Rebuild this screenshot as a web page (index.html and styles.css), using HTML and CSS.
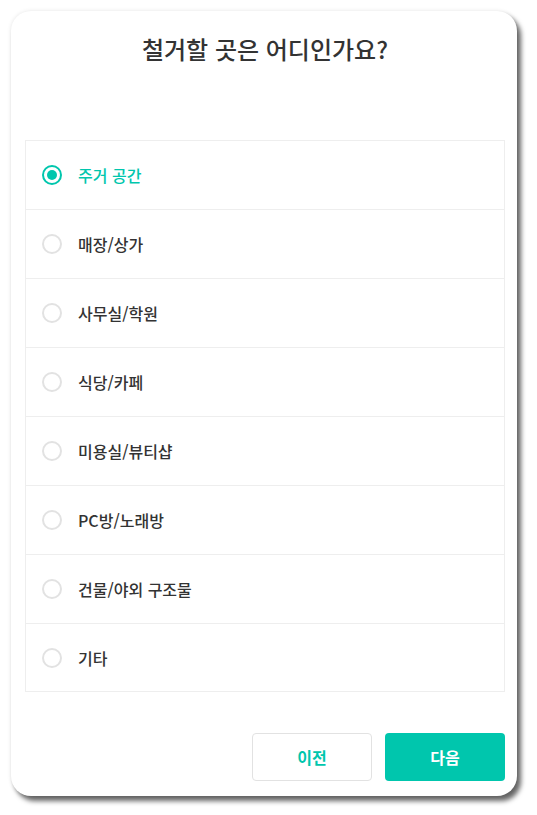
FILE: index.html
```html
<!DOCTYPE html>
<html lang="ko">
<head>
  <meta charset="UTF-8" />
  <meta name="viewport" content="width=device-width, initial-scale=1.0">
  <title>철거 장소 선택</title>
  <link rel="stylesheet" href="styles.css">
</head>
<body>
  <div class="modal">
    <h1 class="modal-title">철거할 곳은 어디인가요?</h1>

    <!-- Place options -->
    <div class="option-list">
      <label class="option-item checked">
        <span class="radio"></span>
        <span class="option-label">주거 공간</span>
      </label>
      <label class="option-item">
        <span class="radio"></span>
        <span class="option-label">매장/상가</span>
      </label>
      <label class="option-item">
        <span class="radio"></span>
        <span class="option-label">사무실/학원</span>
      </label>
      <label class="option-item">
        <span class="radio"></span>
        <span class="option-label">식당/카페</span>
      </label>
      <label class="option-item">
        <span class="radio"></span>
        <span class="option-label">미용실/뷰티샵</span>
      </label>
      <label class="option-item">
        <span class="radio"></span>
        <span class="option-label">PC방/노래방</span>
      </label>
      <label class="option-item">
        <span class="radio"></span>
        <span class="option-label">건물/야외 구조물</span>
      </label>
      <label class="option-item">
        <span class="radio"></span>
        <span class="option-label">기타</span>
      </label>
    </div>

    <div class="modal-footer">
      <button class="btn btn-prev">이전</button>
      <button class="btn btn-next">다음</button>
    </div>
  </div>
</body>
</html>
```

FILE: styles.css
```css
* {
  margin: 0;
  padding: 0;
  box-sizing: border-box;
  font-family: 'Noto Sans CJK KR', 'Noto Sans', sans-serif;
}
body {
  background-color: #fff;
  padding: 11px;
}
.modal {
  width: 506px;
  height: 785px;
  background-color: #fff;
  border-radius: 20px;
  padding: 0 12px 0 14px;
  box-shadow: 4px 5px 5px rgba(0, 0, 0, 0.6), 0 0 4px rgba(0, 0, 0, 0.1);
  display: flex;
  flex-direction: column;
}
.modal-title {
  font-size: 24px;
  font-weight: 500;
  color: #333;
  text-align: center;
  line-height: 30px;
  padding-top: 23px;
  height: 129px;
}
/* Option list */
.option-list {
  border: 1px solid #eee;
}
.option-item {
  display: flex;
  align-items: center;
  height: 69px;
  padding-left: 16px;
  border-bottom: 1px solid #eee;
  cursor: pointer;
}
.option-item:last-child {
  height: 67px;
  border-bottom: none;
}
.radio {
  width: 20px;
  height: 20px;
  border: 2px solid #e2e2e2;
  border-radius: 50%;
  margin-right: 16px;
  display: flex;
  align-items: center;
  justify-content: center;
}
.option-label {
  font-size: 16px;
  font-weight: 500;
  color: #333;
}
.option-item.checked .radio {
  border-color: #00c6ad;
}
.option-item.checked .radio::after {
  content: '';
  width: 10px;
  height: 10px;
  border-radius: 50%;
  background-color: #00c6ad;
}
.option-item.checked .option-label {
  color: #00c6ad;
}
/* Footer buttons */
.modal-footer {
  display: flex;
  justify-content: flex-end;
  gap: 13px;
  margin-top: 41px;
}
.btn {
  width: 120px;
  height: 48px;
  border-radius: 4px;
  font-size: 16px;
  font-weight: 700;
  cursor: pointer;
}
.btn-prev {
  background-color: #fff;
  border: 1px solid #e2e2e2;
  color: #00c6ad;
}
.btn-next {
  background-color: #00c6ad;
  border: none;
  color: #fff;
}
```
